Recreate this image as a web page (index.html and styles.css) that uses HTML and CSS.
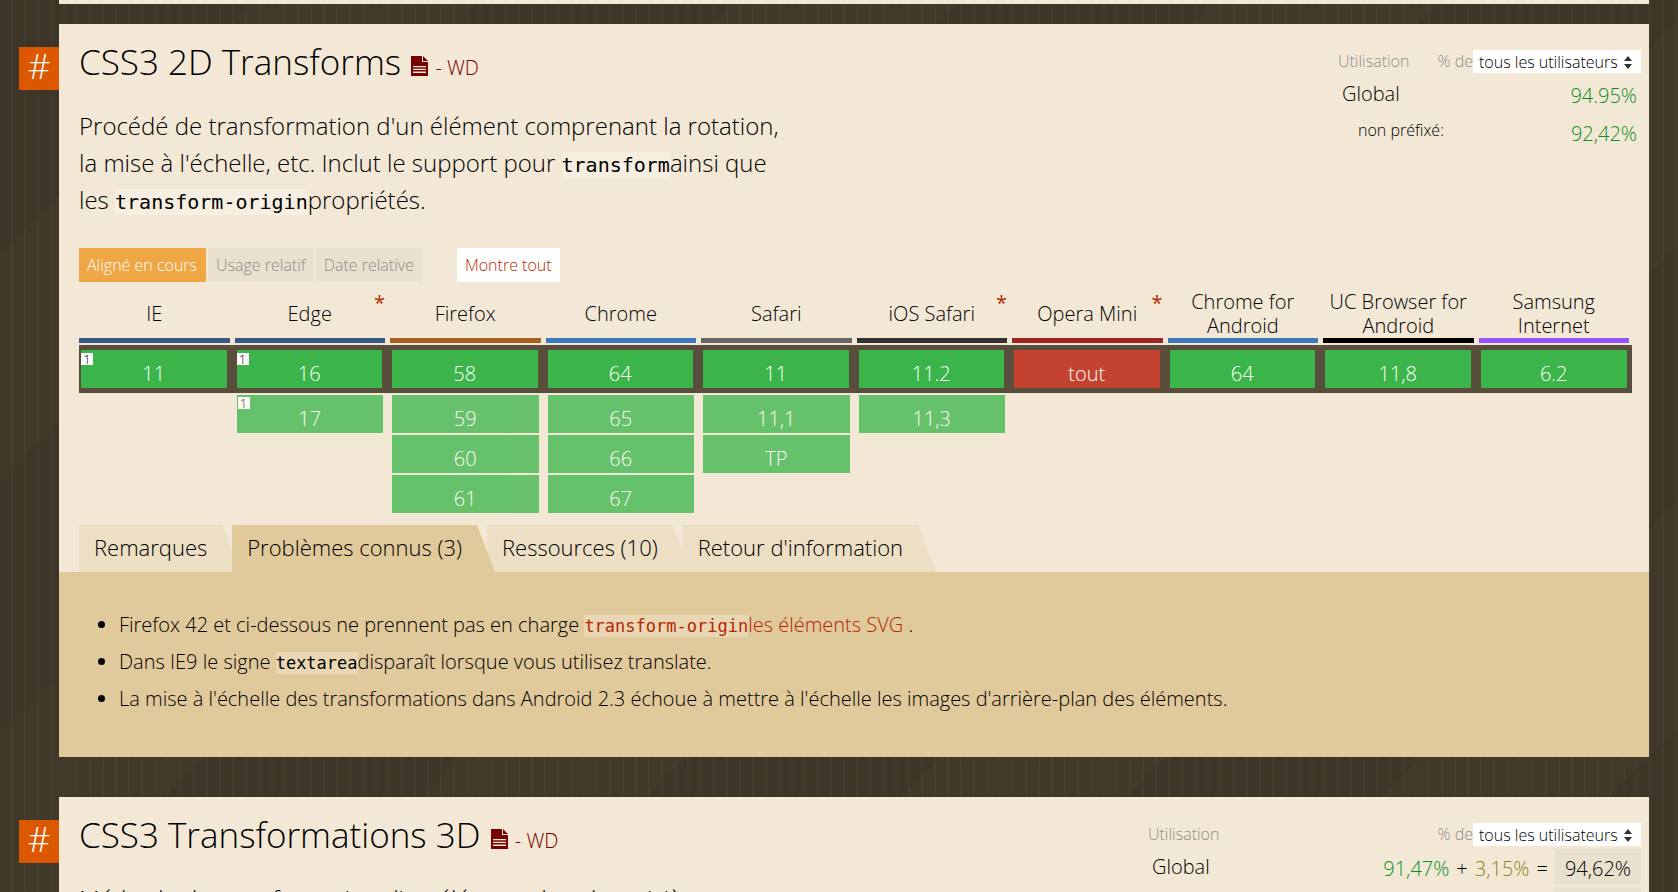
FILE: index.html
```html
<!DOCTYPE html>
<html lang="fr">
<head>
<meta charset="utf-8">
<title>CSS3 2D Transforms</title>
<link rel="stylesheet" href="styles.css">
</head>
<body>
<svg class="defs" aria-hidden="true">
  <symbol id="doc" viewBox="0 0 17 20">
    <path fill="#700" fill-rule="evenodd" d="M0 0h11v6h6v14H0zM12 0l5 5h-5zM2 10h13v1.300H2zM2 12.800h13v1.300H2zM2 15.600h13v1.300H2z"/>
  </symbol>
  <symbol id="arrows" viewBox="0 0 8 13">
    <path fill="#333" d="M0 5l4-5 4 5zM0 8h8l-4 5z"/>
  </symbol>
</svg>
<div class="previous"></div>

<article class="feature">
  <a class="anchor" href="#transforms2d" aria-label="Lien CSS3 2D Transforms">#</a>
  <header class="head">
    <div class="intro">
      <h2 id="transforms2d">CSS3 2D Transforms <a class="spec" href="#spec2d"><svg class="doc"><use href="#doc"/></svg> - WD</a></h2>
      <p class="description">Procédé de transformation d'un élément comprenant la rotation, la mise à l'échelle, etc. Inclut le support pour <code>transform</code>ainsi que les <code>transform-origin</code>propriétés.</p>
    </div>
    <div class="usage">
      <div class="usage-top"><span>Utilisation</span><label class="of" for="u1">% de</label><span class="pick"><select id="u1"><option>tous les utilisateurs</option></select><svg class="arrows"><use href="#arrows"/></svg></span></div>
      <div class="row"><span>Global</span><span class="sum"><b class="yes">94.95%</b></span></div>
      <div class="row"><span class="sub">non préfixé:</span><span class="sum"><b class="yes">92,42%</b></span></div>
    </div>
  </header>

  <div class="modes">
    <button class="mode active">Aligné en cours</button><button class="mode">Usage relatif</button><button class="mode">Date relative</button><button class="mode all">Montre tout</button>
  </div>

  <table class="support">
    <thead>
      <tr>
        <th class="ie"><span>IE</span></th>
        <th class="edge"><span>Edge</span><i>*</i></th>
        <th class="firefox"><span>Firefox</span></th>
        <th class="chrome"><span>Chrome</span></th>
        <th class="safari"><span>Safari</span></th>
        <th class="ios"><span>iOS Safari</span><i>*</i></th>
        <th class="opera"><span>Opera Mini</span><i>*</i></th>
        <th class="chrome"><span>Chrome for Android</span></th>
        <th class="uc"><span>UC Browser for Android</span></th>
        <th class="samsung"><span>Samsung Internet</span></th>
      </tr>
    </thead>
    <tbody>
      <tr class="current">
        <td><div>11<sup>1</sup></div></td><td><div>16<sup>1</sup></div></td><td><div>58</div></td><td><div>64</div></td><td><div>11</div></td><td><div>11.2</div></td><td><div class="no">tout</div></td><td><div>64</div></td><td><div>11,8</div></td><td><div>6.2</div></td>
      </tr>
      <tr class="future">
        <td></td><td><div>17<sup>1</sup></div></td><td><div>59</div></td><td><div>65</div></td><td><div>11,1</div></td><td><div>11,3</div></td><td></td><td></td><td></td><td></td>
      </tr>
      <tr class="future">
        <td></td><td></td><td><div>60</div></td><td><div>66</div></td><td><div>TP</div></td><td></td><td></td><td></td><td></td><td></td>
      </tr>
      <tr class="future">
        <td></td><td></td><td><div>61</div></td><td><div>67</div></td><td></td><td></td><td></td><td></td><td></td><td></td>
      </tr>
    </tbody>
  </table>

  <nav class="tabs">
    <button class="tab">Remarques</button><button class="tab selected">Problèmes connus (3)</button><button class="tab">Ressources (10)</button><button class="tab">Retour d'information</button>
  </nav>
  <div class="panel">
    <ul>
      <li>Firefox 42 et ci-dessous ne prennent pas en charge <a href="#svg"><code>transform-origin</code>les éléments SVG</a> .</li>
      <li>Dans IE9 le signe <code>textarea</code>disparaît lorsque vous utilisez translate.</li>
      <li>La mise à l'échelle des transformations dans Android 2.3 échoue à mettre à l'échelle les images d'arrière-plan des éléments.</li>
    </ul>
  </div>
</article>

<article class="feature">
  <a class="anchor" href="#transforms3d" aria-label="Lien CSS3 Transformations 3D">#</a>
  <header class="head">
    <div class="intro">
      <h2 id="transforms3d">CSS3 Transformations 3D <a class="spec" href="#spec3d"><svg class="doc"><use href="#doc"/></svg> - WD</a></h2>
      <p class="description">Méthode de transformation d'un élément dans la troisiè</p>
    </div>
    <div class="usage wide">
      <div class="usage-top"><span>Utilisation</span><label class="of" for="u2">% de</label><span class="pick"><select id="u2"><option>tous les utilisateurs</option></select><svg class="arrows"><use href="#arrows"/></svg></span></div>
      <div class="row"><span>Global</span><span class="sum"><b class="yes">91,47%</b><span>+</span><b class="partial">3,15%</b><span>=</span><b class="total">94,62%</b></span></div>
      <div class="row"><span></span><span class="sum"><b class="total blank"></b></span></div>
    </div>
  </header>
</article>
</body>
</html>
```
FILE: styles.css
```css
* { box-sizing: border-box; }

body {
  margin: 0;
  height: 100vh;
  overflow: hidden;
  padding: 0 29px 0 59px;
  background:
    repeating-linear-gradient(90deg, transparent 0 11px, rgba(255, 240, 210, 0.03) 11px 13px),
    repeating-linear-gradient(135deg, #3d3527 0 180px, #403829 180px 340px);
  color: #000;
  font: 300 20px/24px "Open Sans", "Noto Sans", sans-serif;
}

button, select { font: inherit; border: 0; border-radius: 0; margin: 0; }
b, i { font-weight: inherit; font-style: normal; }
a { color: #b52700; text-decoration: none; }
.defs { display: none; }

.previous { height: 4px; background: #f3e8d6; }

.feature {
  position: relative;
  margin: 20px 0 40px;
  background: #f3e8d6;
}

.anchor {
  position: absolute;
  left: -40px;
  top: 23px;
  width: 40px;
  height: 43px;
  background: #dc5800;
  color: #fff;
  font-size: 35px;
  line-height: 38px;
  text-align: center;
}

.head {
  display: flex;
  justify-content: space-between;
  padding: 13px 8px 0 20px;
  min-height: 224px;
}

.intro { width: 720px; }

h2 {
  margin: 0;
  font-size: 35px;
  font-weight: 300;
  line-height: 50px;
}

.spec { color: #700; font-size: 20px; }
.doc { width: 17px; height: 20px; margin: 0 2px 0 1px; vertical-align: -1px; }

.description {
  margin: 14px 0 0;
  font-size: 24px;
  line-height: 37px;
}

code {
  padding: 1px 0;
  background: rgba(255, 255, 255, 0.25);
  font-family: "DejaVu Sans Mono", monospace;
  font-weight: 400;
  font-size: 20px;
  line-height: 20px;
}

.usage { width: 303px; padding-top: 12px; }
.usage.wide { width: 493px; }

.usage-top {
  display: flex;
  align-items: center;
  margin-bottom: 5px;
  color: #8c8c8c;
  font-size: 16px;
}

.of { margin-left: auto; }
.pick { position: relative; }

.pick select {
  display: block;
  width: 168px;
  height: 23px;
  padding: 0 6px 3px;
  appearance: none;
  background: #fff;
  color: #000;
}

.arrows {
  position: absolute;
  right: 9px;
  top: 6px;
  width: 8px;
  height: 13px;
  pointer-events: none;
}

.row {
  display: flex;
  justify-content: space-between;
  height: 36px;
  margin-bottom: 2px;
  padding-left: 4px;
  line-height: 32px;
}

.row .sub { padding-left: 16px; font-size: 16px; line-height: 28px; }
.sum { display: flex; gap: 7px; align-items: baseline; padding: 2px 4px 0 0; }
.wide .sum { margin-top: -2px; padding: 0; }
.yes { color: #0a8f1e; }
.partial { color: #8b8514; }

.total {
  height: 35px;
  padding: 4px 10px 0;
  background: #e9e1ce;
  line-height: 31px;
}

.total.blank { width: 87px; }

.modes { display: flex; gap: 2px; padding-left: 20px; }

.mode {
  height: 34px;
  padding: 0 8px;
  background: #e9e1ce;
  color: #8c8c8c;
  font-size: 16px;
}

.mode.active { padding-right: 9px; background: #eea744; color: #fff; }
.mode.all { margin-left: 33px; background: #fff; color: #b52700; }

.support {
  width: calc(100% - 35px);
  margin: 7px 0 12px 20px;
  table-layout: fixed;
  border-spacing: 0;
}

.support th {
  position: relative;
  padding: 0 5px 2px 0;
  font-weight: 300;
}

.support th span {
  display: flex;
  align-items: center;
  justify-content: center;
  height: 54px;
  padding-top: 1px;
  border-bottom: 5px solid;
  border-color: var(--brand);
}

.support th i {
  position: absolute;
  right: 5px;
  top: 2px;
  color: #b52700;
  font-weight: 400;
}

.ie, .edge { --brand: #355887; }
.firefox { --brand: #a66121; }
.chrome { --brand: #3e7abd; }
.safari { --brand: #666; }
.ios { --brand: #333; }
.opera { --brand: #9b2625; }
.uc { --brand: #000; }
.samsung { --brand: #9751ff; }

.support td {
  padding: 2px 7px 0 2px;
  text-align: center;
}

.support .current td {
  padding: 5px 8px 5px 2px;
  background: #594e3b;
}

.support .current td:last-child {
  padding-right: 5px;
  border-right: 2px solid #f3e8d6;
}

.support td div {
  position: relative;
  height: 38px;
  padding-top: 12px;
  background: #3bb54a;
  color: #fff;
}

.support td .no { background: #c44230; }
.future div { opacity: 0.76; }

.support sup {
  position: absolute;
  left: 0;
  top: 3px;
  width: 12px;
  height: 12px;
  background: #fff;
  color: #000;
  font-size: 13px;
  line-height: 12px;
}

.future sup { margin: -1px 0 0 1px; }

.tabs { display: flex; padding-left: 20px; }

.tab {
  height: 47px;
  padding: 0 33px 3px 15px;
  background: #ecdfc4;
  clip-path: polygon(0 0, calc(100% - 18px) 0, 100% 100%, 0 100%);
  font-size: 22px;
}

.tab + .tab { margin-left: -8px; }
.tab.selected { position: relative; z-index: 1; background: #e0c99b; }

.panel { padding: 34px 20px 40px 60px; background: #e0c99b; }
.panel ul { margin: 0; padding: 0; }
.panel li { line-height: 37px; }
.panel code { font-size: 17px; }
```
